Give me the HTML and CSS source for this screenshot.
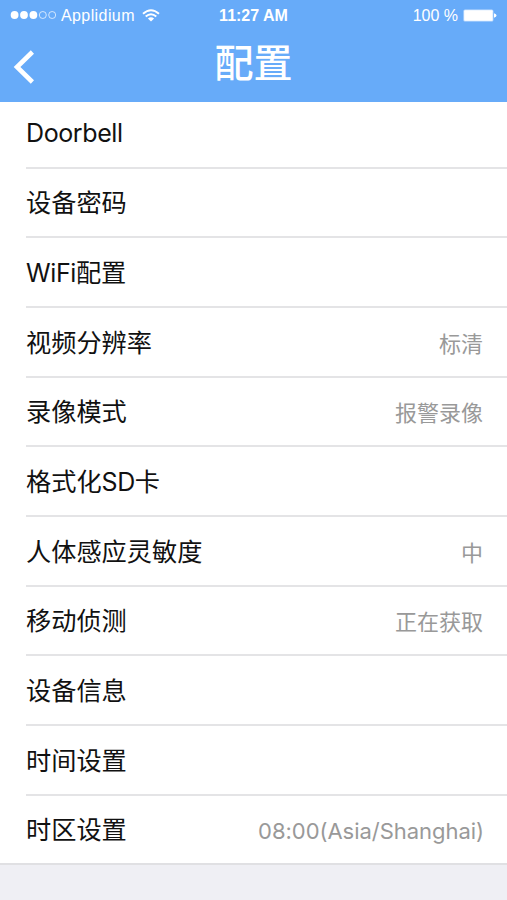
FILE: index.html
```html
<!DOCTYPE html>
<html lang="zh-CN">
<head>
  <meta charset="UTF-8">
  <meta name="viewport" content="width=device-width, initial-scale=1.0">
  <title>配置</title>
  <link rel="stylesheet" href="styles.css">
</head>
<body>
  <header class="header">
    <div class="status-bar">
      <div class="carrier">
        <svg class="signal" width="46" height="10" viewBox="0 0 46 10">
          <circle cx="4.6" cy="5" r="3.9" fill="#fff"/>
          <circle cx="14" cy="5" r="3.9" fill="#fff"/>
          <circle cx="23.4" cy="5" r="3.9" fill="#fff"/>
          <circle cx="32.8" cy="5" r="3.5" fill="none" stroke="#fff" stroke-width="0.7"/>
          <circle cx="42.2" cy="5" r="3.5" fill="none" stroke="#fff" stroke-width="0.7"/>
        </svg>
        <span class="carrier-name">Applidium</span>
        <svg class="wifi" width="18" height="13" viewBox="0 0 18 13">
          <path d="M1 4.8Q9 -2.4 17 4.8M3.7 7.5Q9 2.8 14.3 7.5" fill="none" stroke="#fff" stroke-width="1.9"/>
          <path d="M5.9 9.5Q9 7 12.1 9.5L9 12.6Z" fill="#fff"/>
        </svg>
      </div>
      <span class="clock">11:27 AM</span>
      <div class="battery">
        <span class="battery-level">100 %</span>
        <svg width="34" height="13" viewBox="0 0 34 13">
          <rect x="0.4" y="0.4" width="30" height="12.2" rx="1.6" fill="#fff" fill-opacity="0.6"/>
          <rect x="1.2" y="1.2" width="28.4" height="10.6" rx="1" fill="#fff"/>
          <path d="M31 4.2Q33.6 5 33.6 6.5T31 8.8Z" fill="#fff"/>
        </svg>
      </div>
    </div>
    <div class="nav-bar">
      <svg class="back" width="22" height="34" viewBox="0 0 22 34">
        <path d="M19.4 2L4 17L19.4 32" fill="none" stroke="#fff" stroke-width="4.6"/>
      </svg>
      <h1 class="title">配置</h1>
    </div>
  </header>
  <ul class="list">
    <li class="row"><span class="label"><span class="latin">Doorbell</span></span></li>
    <li class="row"><span class="label">设备密码</span></li>
    <li class="row"><span class="label"><span class="latin">WiFi</span>配置</span></li>
    <li class="row"><span class="label">视频分辨率</span><span class="value">标清</span></li>
    <li class="row"><span class="label">录像模式</span><span class="value">报警录像</span></li>
    <li class="row"><span class="label">格式化<span class="latin">SD</span>卡</span></li>
    <li class="row"><span class="label">人体感应灵敏度</span><span class="value">中</span></li>
    <li class="row"><span class="label">移动侦测</span><span class="value">正在获取</span></li>
    <li class="row"><span class="label">设备信息</span></li>
    <li class="row"><span class="label">时间设置</span></li>
    <li class="row"><span class="label">时区设置</span><span class="value timezone">08:00(Asia/Shanghai)</span></li>
  </ul>
</body>
</html>
```

FILE: styles.css
```css
* {
  box-sizing: border-box;
}

body {
  margin: 0;
  height: 900px;
  background: #efeff4;
  font-family: Inter, "Noto Sans CJK SC", sans-serif;
  color: #111;
  overflow: hidden;
}

.header {
  height: 102px;
  background: #67abf9;
  color: #fff;
}

.status-bar {
  display: grid;
  grid-template-columns: 1fr auto 1fr;
  align-items: center;
  height: 30px;
  padding: 0 10px;
  font-family: "Liberation Sans", Arial, sans-serif;
  font-size: 16px;
}

.carrier,
.battery {
  display: flex;
  align-items: center;
}

.carrier {
  gap: 5px;
}

.carrier-name {
  padding-top: 1px;
  letter-spacing: 0.4px;
}

.wifi {
  margin-left: 2px;
}

.clock {
  padding-top: 2px;
  font-weight: bold;
}

.battery {
  justify-content: flex-end;
  gap: 5px;
}

.battery-level {
  padding-top: 1px;
}

.nav-bar {
  display: grid;
  grid-template-columns: 60px 1fr 60px;
  align-items: center;
  height: 72px;
}

.back {
  margin: 2px 0 0 13px;
}

.title {
  margin: 0 0 6px;
  font-size: 39px;
  font-weight: 500;
  line-height: 56px;
  text-align: center;
}

.list {
  height: 763px;
  margin: 0;
  padding: 0;
  list-style: none;
  background: #fff;
  border-bottom: 2px solid #e0e0e3;
}

.row {
  display: flex;
  align-items: center;
  justify-content: space-between;
  height: 69.7px;
  margin-left: 26px;
  padding-right: 24px;
  border-bottom: 2px solid #e4e4e6;
}

.row:first-child {
  height: 66.5px;
}

.row:last-child {
  height: 67.7px;
  border-bottom: 0;
}

.label {
  padding-bottom: 2px;
  font-size: 25.2px;
}

.row:last-child .label {
  padding-bottom: 3px;
}

.latin {
  font-size: 25px;
  letter-spacing: -0.4px;
}

.value {
  font-size: 22px;
  color: #999;
}

.timezone {
  padding-top: 2px;
  letter-spacing: -0.04px;
  margin-right: -1px;
}
```
